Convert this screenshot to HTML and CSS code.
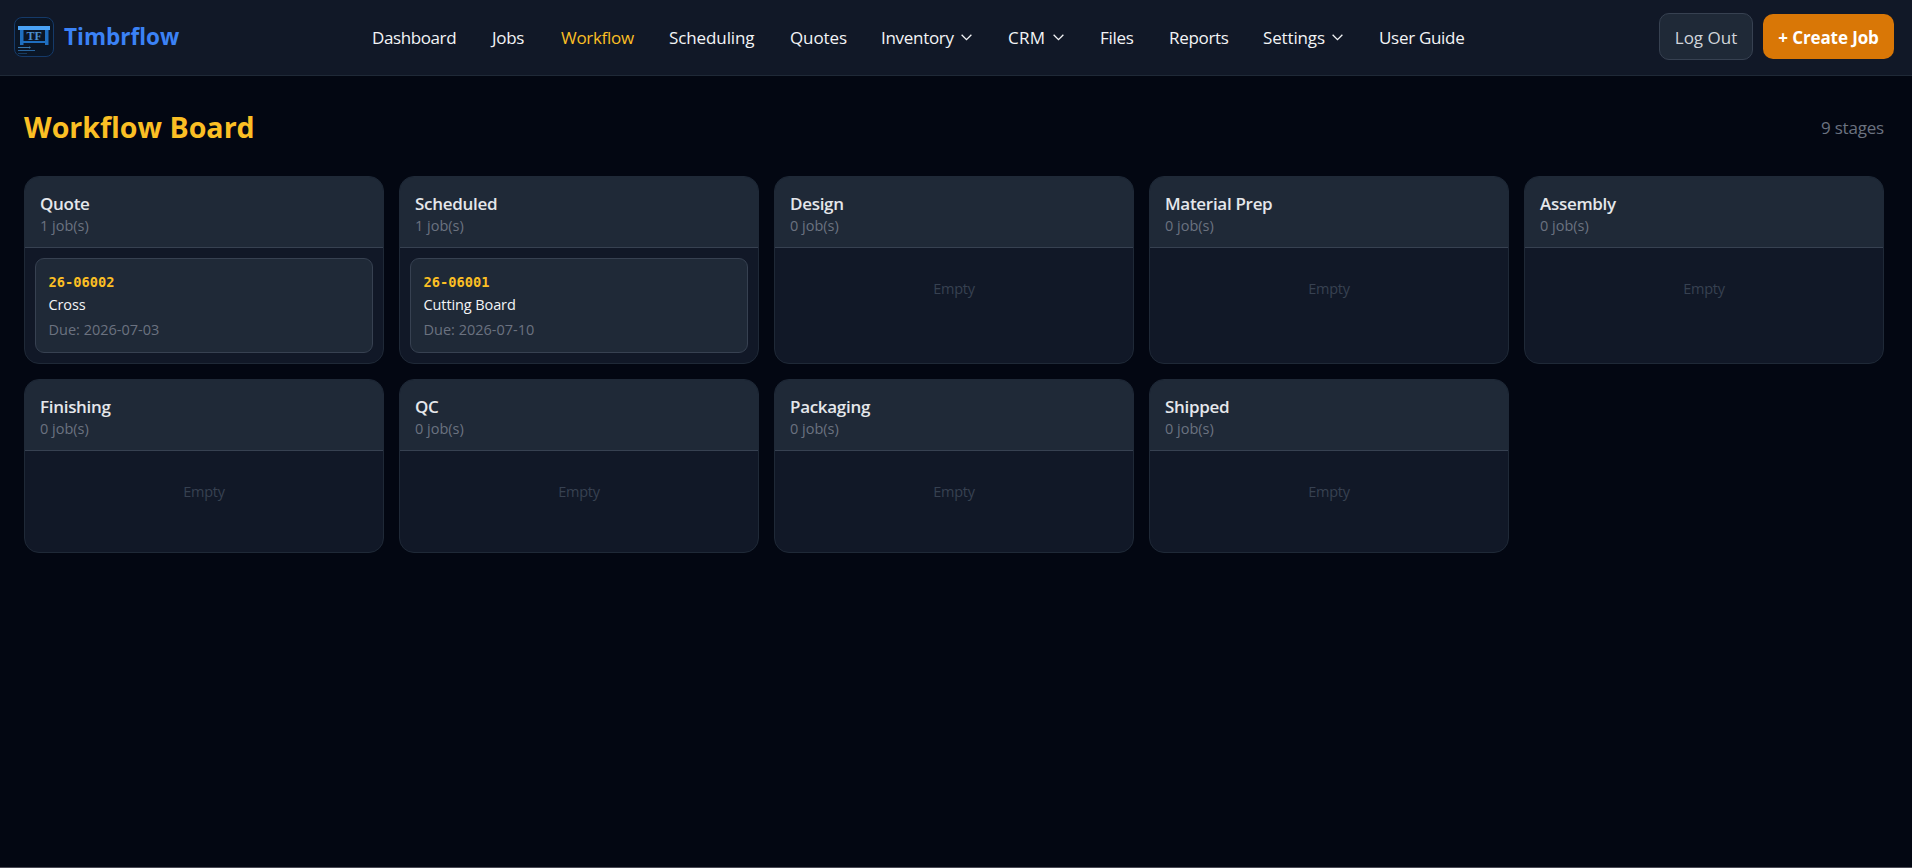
FILE: index.html
```html
<!DOCTYPE html>
<html lang="en">
<head>
  <meta charset="UTF-8" />
  <title>Timbrflow - Workflow Board</title>
  <link rel="stylesheet" href="styles.css">
</head>
<body>
  <header class="topbar">
    <a class="brand">
      <svg class="brand-logo" viewBox="0 0 40 40">
        <rect x="0.5" y="0.5" width="39" height="39" rx="7.5" fill="#0b1626" stroke="#153a69" />
        <rect x="6" y="13" width="3.5" height="15" fill="#1f6fc0" />
        <rect x="31" y="13" width="3.5" height="15" fill="#1f6fc0" />
        <rect x="6" y="24" width="28" height="2" fill="#1f6fc0" />
        <rect x="4" y="9" width="32" height="4" fill="#4aa3f7" />
        <text x="20.2" y="23" text-anchor="middle" class="logo-text">TF</text>
        <path d="M4 30.5h12" stroke="#3877ae" stroke-width="1" />
        <path d="M15 29.2l2 1.3-2 1.3z" fill="#3877ae" />
        <path d="M4 33.5h17" stroke="#28639b" stroke-width="1" />
        <path d="M4 36.5h9" stroke="#183c60" stroke-width="1" />
      </svg>
      <span class="brand-name">Timbrflow</span>
    </a>

    <nav class="nav">
      <a class="nav-dashboard">Dashboard</a>
      <a class="nav-jobs">Jobs</a>
      <a class="nav-workflow active">Workflow</a>
      <a class="nav-scheduling">Scheduling</a>
      <a class="nav-quotes">Quotes</a>
      <a class="nav-inventory">Inventory <svg class="chevron" viewBox="0 0 12 12"><path d="M1.5 3.5L6 8l4.5-4.5" /></svg></a>
      <a class="nav-crm">CRM <svg class="chevron" viewBox="0 0 12 12"><path d="M1.5 3.5L6 8l4.5-4.5" /></svg></a>
      <a class="nav-files">Files</a>
      <a class="nav-reports">Reports</a>
      <a class="nav-settings">Settings <svg class="chevron" viewBox="0 0 12 12"><path d="M1.5 3.5L6 8l4.5-4.5" /></svg></a>
      <a class="nav-guide">User Guide</a>
    </nav>

    <div class="actions">
      <button class="btn btn-logout">Log Out</button>
      <button class="btn btn-create">+ Create Job</button>
    </div>
  </header>

  <main class="page">
    <div class="page-head">
      <h1>Workflow Board</h1>
      <span class="stage-count">9 stages</span>
    </div>

    <div class="board">
      <section class="column">
        <div class="column-head">
          <h2>Quote</h2>
          <p>1 job(s)</p>
        </div>
        <div class="column-body">
          <div class="job">
            <div class="job-number">26-06002</div>
            <div class="job-name">Cross</div>
            <div class="job-due">Due: 2026-07-03</div>
          </div>
        </div>
      </section>

      <section class="column">
        <div class="column-head">
          <h2>Scheduled</h2>
          <p>1 job(s)</p>
        </div>
        <div class="column-body">
          <div class="job">
            <div class="job-number">26-06001</div>
            <div class="job-name">Cutting Board</div>
            <div class="job-due">Due: 2026-07-10</div>
          </div>
        </div>
      </section>

      <section class="column">
        <div class="column-head">
          <h2>Design</h2>
          <p>0 job(s)</p>
        </div>
        <div class="column-body"><div class="empty">Empty</div></div>
      </section>

      <section class="column">
        <div class="column-head">
          <h2>Material Prep</h2>
          <p>0 job(s)</p>
        </div>
        <div class="column-body"><div class="empty">Empty</div></div>
      </section>

      <section class="column">
        <div class="column-head">
          <h2>Assembly</h2>
          <p>0 job(s)</p>
        </div>
        <div class="column-body"><div class="empty">Empty</div></div>
      </section>

      <section class="column">
        <div class="column-head">
          <h2>Finishing</h2>
          <p>0 job(s)</p>
        </div>
        <div class="column-body"><div class="empty">Empty</div></div>
      </section>

      <section class="column">
        <div class="column-head">
          <h2>QC</h2>
          <p>0 job(s)</p>
        </div>
        <div class="column-body"><div class="empty">Empty</div></div>
      </section>

      <section class="column">
        <div class="column-head">
          <h2>Packaging</h2>
          <p>0 job(s)</p>
        </div>
        <div class="column-body"><div class="empty">Empty</div></div>
      </section>

      <section class="column">
        <div class="column-head">
          <h2>Shipped</h2>
          <p>0 job(s)</p>
        </div>
        <div class="column-body"><div class="empty">Empty</div></div>
      </section>
    </div>
  </main>
</body>
</html>
```

FILE: styles.css
```css
* {
  box-sizing: border-box;
}

body {
  margin: 0;
  height: 868px;
  background-color: #030712;
  border-bottom: 1px solid #4b4b55;
  color: #e5e7eb;
  font-family: "Segoe UI", "Open Sans", "Noto Sans", sans-serif;
  font-size: 17px;
}

h1, h2, p {
  margin: 0;
}

.topbar {
  display: flex;
  align-items: center;
  height: 76px;
  padding: 0 18px 2px 14px;
  background-color: #111827;
  border-bottom: 1px solid #1f2937;
}

.brand {
  display: flex;
  align-items: center;
  gap: 10px;
  width: 358px;
}

.brand-logo {
  width: 40px;
  height: 40px;
}

.logo-text {
  font-family: "Liberation Serif", serif;
  font-size: 12px;
  font-weight: bold;
  fill: #4a8fd0;
}

.brand-name {
  color: #3b82f6;
  font-size: 22.5px;
  font-weight: 700;
}

.nav {
  display: flex;
  align-items: center;
  gap: 35px;
  flex: 1;
  padding-top: 1px;
  color: #f3f4f6;
  font-size: 17px;
  letter-spacing: -0.3px;
  white-space: nowrap;
}

.nav a {
  display: flex;
  align-items: center;
  justify-content: space-between;
}

.nav .active {
  color: #fbbf24;
}

.nav-dashboard { width: 85px; letter-spacing: -0.4px; }
.nav-jobs { width: 34px; }
.nav-workflow { width: 73px; }
.nav-scheduling { width: 86px; letter-spacing: -0.1px; }
.nav-quotes { width: 56px; letter-spacing: -0.1px; }
.nav-inventory { width: 92px; }
.nav-crm { width: 57px; letter-spacing: 0.3px; }
.nav-files { width: 34px; }
.nav-reports { width: 59px; }
.nav-settings { width: 81px; letter-spacing: -0.15px; }
.nav-guide { width: 86px; letter-spacing: -0.3px; }

.chevron {
  width: 13px;
  height: 13px;
  fill: none;
  stroke: currentColor;
  stroke-width: 1.2;
}

.actions {
  display: flex;
  align-items: center;
  gap: 10px;
}

.btn {
  height: 45px;
  padding: 2px 0 0;
  border: none;
  border-radius: 10px;
  font-family: inherit;
  font-size: 17px;
  white-space: nowrap;
}

.btn-logout {
  width: 94px;
  height: 47px;
  border: 1px solid #374151;
  background-color: #1f2937;
  color: #d1d5db;
}

.btn-create {
  width: 131px;
  background-color: #d97706;
  color: white;
  font-weight: 700;
  letter-spacing: -0.1px;
}

.page {
  padding: 26px 28px 0 24px;
}

.page-head {
  display: flex;
  justify-content: space-between;
  align-items: center;
  height: 50px;
  margin-bottom: 24px;
}

.page-head h1 {
  padding-bottom: 2px;
  color: #fbbf24;
  font-size: 28.6px;
  font-weight: 700;
}

.stage-count {
  letter-spacing: -0.2px;
  color: #6b7280;
}

.board {
  display: grid;
  grid-template-columns: repeat(5, 1fr);
  gap: 15px;
}

.column {
  border: 1px solid #1f2937;
  border-radius: 15px;
  background-color: #111827;
  overflow: hidden;
}

.column-head {
  height: 71px;
  padding: 14px 15px;
  background-color: #1f2937;
  border-bottom: 1px solid #374151;
}

.column-head h2 {
  font-size: 17px;
  font-weight: 600;
  letter-spacing: -0.3px;
  line-height: 26px;
}

.column-head p {
  color: #6b7280;
  font-size: 14.5px;
  line-height: 18px;
}

.column-body {
  min-height: 101px;
  padding: 10px;
}

.job {
  height: 95px;
  padding: 13px 12.5px;
  border: 1px solid #374151;
  border-radius: 9px;
  background-color: #1f2937;
}

.job-number {
  color: #fbbf24;
  font-family: Consolas, "DejaVu Sans Mono", monospace;
  font-size: 13.7px;
  font-weight: 700;
  line-height: 21px;
}

.job-name {
  color: #f3f4f6;
  font-size: 14.5px;
  letter-spacing: -0.1px;
  line-height: 24px;
}

.job-due {
  color: #6b7280;
  font-size: 14.5px;
  line-height: 25px;
}

.empty {
  padding-top: 19px;
  color: #374151;
  font-size: 14.5px;
  letter-spacing: -0.3px;
  line-height: 24px;
  text-align: center;
}
```
